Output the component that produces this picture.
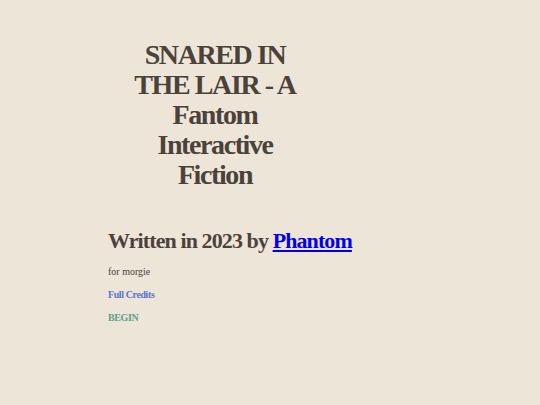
import React from 'react';

const serif = { fontFamily: '"Liberation Serif", "DejaVu Serif", serif' };

export default function App() {
  return (
    <div className="min-h-[405px] w-full bg-[#eee5d9] text-[#4b4339]" style={serif}>
      <div className="mx-auto w-[324px] pt-[40px]">
        <h1 className="w-[214px] text-center text-[28px] font-bold leading-[30px] tracking-[-1.4px]">
          SNARED IN<br />THE LAIR - A<br />Fantom<br />Interactive<br />Fiction
        </h1>
        <h2 className="mt-[38px] whitespace-nowrap text-[22px] font-bold leading-[26px] tracking-[-0.9px]">
          Written in 2023 by{' '}
          <a href="#" className="text-[#0000ee] underline">Phantom</a>
        </h2>
        <p className="mt-[12px] text-[10px] leading-[12px]">for morgie</p>
        <p className="mt-[11px] text-[10px] font-bold leading-[12px] tracking-[-0.4px] text-[#5b74d0]">Full Credits</p>
        <p className="mt-[11px] text-[10px] font-bold leading-[12px] tracking-[-0.4px] text-[#5fa08a]">BEGIN</p>
      </div>
    </div>
  );
}
